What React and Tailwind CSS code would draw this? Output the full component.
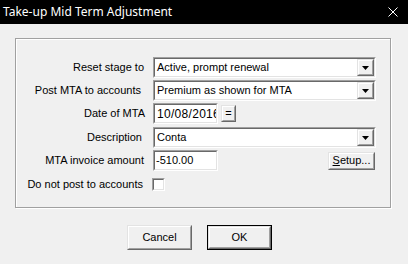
import React from 'react';

const sunken = 'border border-t-[#a0a0a0] border-l-[#a0a0a0] border-b-white border-r-white';
const sunkenInner = 'border border-t-[#696969] border-l-[#696969] border-b-[#e3e3e3] border-r-[#e3e3e3]';
const raised = 'border border-t-[#e3e3e3] border-l-[#e3e3e3] border-b-[#696969] border-r-[#696969]';
const raisedInner = 'border border-t-white border-l-white border-b-[#a0a0a0] border-r-[#a0a0a0]';

const Field = ({ width, children, className = '' }) => (
  <div className={`${sunken} h-[21px] ${width}`}>
    <div className={`${sunkenInner} h-full bg-white flex items-center overflow-hidden ${className}`}>
      {children}
    </div>
  </div>
);

const DropArrow = () => (
  <div className={`${raised} w-[17px] h-full bg-[#f0f0f0]`}>
    <div className={`${raisedInner} w-full h-full flex items-center justify-center`}>
      <svg width="7" height="4" viewBox="0 0 7 4">
        <path d="M0 0h7L3.5 4z" fill="#000" />
      </svg>
    </div>
  </div>
);

const Combo = ({ value }) => (
  <Field width="w-[223px]">
    <span className="pl-[2px] flex-1 whitespace-nowrap">{value}</span>
    <DropArrow />
  </Field>
);

const Row = ({ label, pr = 'pr-0', mt, children }) => (
  <div className={`flex items-center ${mt}`}>
    <div className={`w-[128px] text-right whitespace-nowrap ${pr}`}>{label}</div>
    <div className="ml-[8px] flex items-center flex-1">{children}</div>
  </div>
);

const PushButton = ({ children, width, height, isDefault }) => (
  <div className={`${isDefault ? 'border border-black' : ''} ${width} ${height}`}>
    <div className={`${raised} w-full h-full`}>
      <div className={`${raisedInner} w-full h-full flex items-center justify-center`}>
        {children}
      </div>
    </div>
  </div>
);

export default function App() {
  return (
    <div className="w-[408px] h-[264px] bg-[#f0f0f0] text-[11px] text-black overflow-hidden" style={{ fontFamily: '"Liberation Sans", Arial, sans-serif' }}>
      {/* Title bar */}
      <div className="h-[24px] bg-black flex items-center justify-between text-white">
        <span className="pl-[3px] text-[12px]" style={{ fontFamily: '"Noto Sans", sans-serif' }}>Take-up Mid Term Adjustment</span>
        <svg width="10" height="10" viewBox="0 0 10 10" className="mr-[10px]">
          <path d="M0.5 0.5l9 9M9.5 0.5l-9 9" stroke="#fff" strokeWidth="1" />
        </svg>
      </div>

      {/* Group box (etched) */}
      <div className="ml-[15px] mt-[14px] w-[376px] h-[170px] border border-[#a0a0a0] shadow-[1px_1px_0_#fff]">
        <div className="h-full border-t border-l border-white pt-[17px]">
          <Row label="Reset stage to" pr="pr-[1px]">
            <Combo value="Active, prompt renewal" />
          </Row>
          <Row label="Post MTA to accounts" pr="pr-[4px]" mt="mt-[2px]">
            <Combo value="Premium as shown for MTA" />
          </Row>
          <Row label="Date of MTA" mt="mt-[2px]">
            <Field width="w-[65px]">
              <span className="pl-[2px] whitespace-nowrap text-[12px] tracking-[0.3px]">10/08/2016</span>
            </Field>
            <div className="ml-[3px] w-[15px] h-[17px]">
              <div className={`${raised} w-full h-full`}>
                <div className={`${raisedInner} w-full h-full flex items-center justify-center leading-none`}>=</div>
              </div>
            </div>
          </Row>
          <Row label="Description" pr="pr-[3px]" mt="mt-[3px]">
            <Combo value="Conta" />
          </Row>
          <Row label="MTA invoice amount" pr="pr-[1px]" mt="mt-[2px]">
            <Field width="w-[65px]">
              <span className="pl-[1px] whitespace-nowrap">-510.00</span>
            </Field>
            <div className="ml-[110px]">
              <PushButton width="w-[47px]" height="h-[18px]">
                <span><span className="underline">S</span>etup...</span>
              </PushButton>
            </div>
          </Row>
          <Row label="Do not post to accounts" pr="pr-[2px]" mt="mt-[5px]">
            <div className={`${sunken} w-[13px] h-[13px] -ml-[1px]`}>
              <div className={`${sunkenInner} w-full h-full bg-white`} />
            </div>
          </Row>
        </div>
      </div>

      {/* Buttons */}
      <div className="flex mt-[17px] ml-[127px] gap-[15px]">
        <PushButton width="w-[65px]" height="h-[25px]">Cancel</PushButton>
        <PushButton width="w-[65px]" height="h-[25px]" isDefault>OK</PushButton>
      </div>
    </div>
  );
}
